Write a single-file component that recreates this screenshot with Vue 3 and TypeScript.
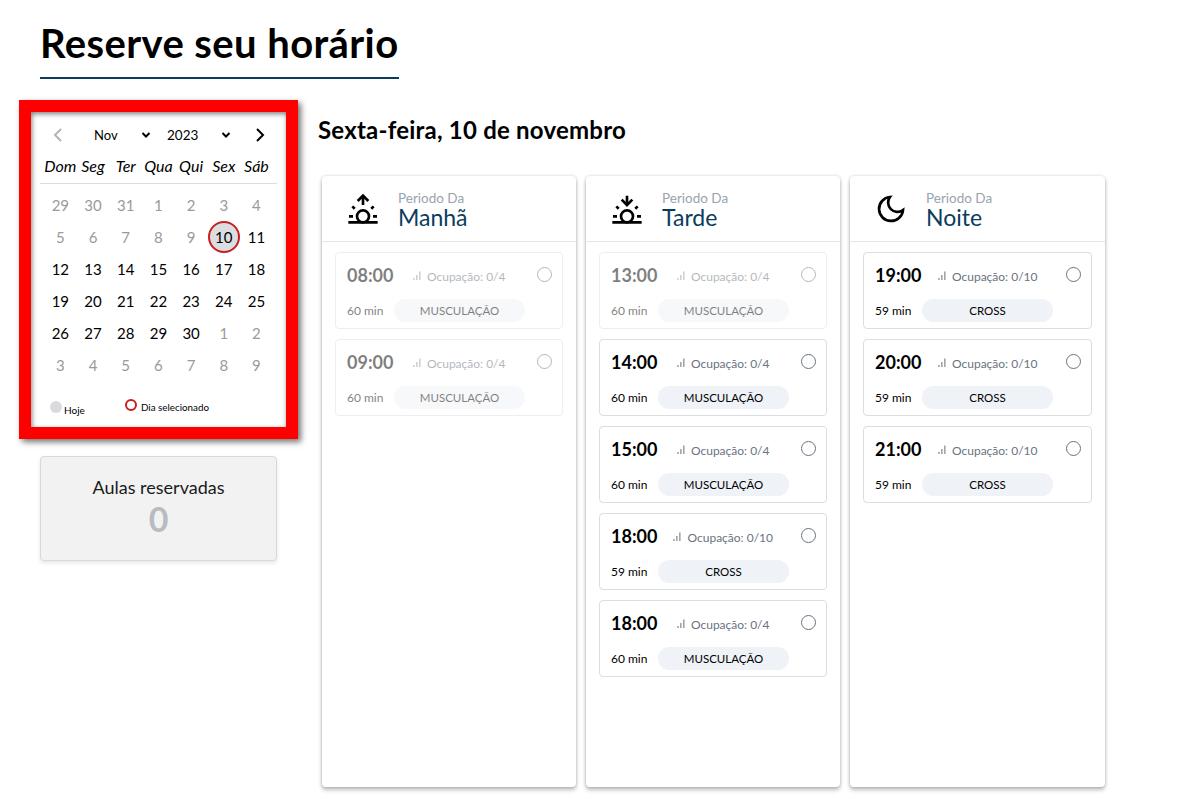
<template>
  <div class="page">
    <h1 class="title">Reserve seu horário</h1>
    <div class="content">
      <aside class="side">
        <div class="calendar">
          <div class="cal-nav">
            <svg class="chev off" viewBox="0 0 12 16"><path d="M9 2 3 8l6 6" /></svg>
            <span class="month">Nov</span>
            <svg class="caret" viewBox="0 0 10 8"><path d="M1.5 2 5 5.5 8.5 2" /></svg>
            <span class="year">2023</span>
            <svg class="caret" viewBox="0 0 10 8"><path d="M1.5 2 5 5.5 8.5 2" /></svg>
            <svg class="chev" viewBox="0 0 12 16"><path d="M3 2l6 6-6 6" /></svg>
          </div>
          <div class="weekdays">
            <span v-for="w in weekdays" :key="w">{{ w }}</span>
          </div>
          <div class="days">
            <span
              v-for="d in days"
              :key="d.key"
              class="day"
              :class="{ muted: d.muted, selected: d.selected }"
            >{{ d.n }}</span>
          </div>
          <div class="legend">
            <span class="leg-today"><i class="dot-today" />Hoje</span>
            <span class="leg-sel"><i class="dot-sel" />Dia selecionado</span>
          </div>
        </div>
        <div class="reserved">
          <div class="reserved-label">Aulas reservadas</div>
          <div class="reserved-count">0</div>
        </div>
      </aside>
      <main class="main">
        <h2 class="date">Sexta-feira, 10 de novembro</h2>
        <div class="columns">
          <section v-for="p in periods" :key="p.name" class="column">
            <header class="col-head">
              <svg class="period-icon" viewBox="0 0 24 24">
                <template v-if="p.icon === 'moon'">
                  <path d="M21 12.79A9 9 0 1 1 11.21 3 7 7 0 0 0 21 12.79z" />
                </template>
                <template v-else>
                  <circle cx="12" cy="17.5" r="4.5" />
                  <path d="M12 9V2M4 10l1.8 1.8M1.5 17.5H4.5M19.5 17.5h3M18.2 11.8L20 10M1 22h22" />
                  <path v-if="p.icon === 'up'" d="M8 6l4-4 4 4" />
                  <path v-else d="M8 5l4 4 4-4" />
                </template>
              </svg>
              <div class="period-text">
                <div class="period-of">Periodo Da</div>
                <div class="period-name">{{ p.name }}</div>
              </div>
            </header>
            <div class="slots">
              <div
                v-for="(s, i) in p.slots"
                :key="i"
                class="slot"
                :class="{ disabled: s.off }"
              >
                <div class="slot-top">
                  <span class="time">{{ s.time }}</span>
                  <span class="occ">
                    <svg class="bars" viewBox="0 0 8 9"><path d="M.3 9V7h1.3v2zM3.2 9V4h1.3v5zM6.2 9V.5h1.3V9z" /></svg>
                    Ocupação: {{ s.occ }}
                  </span>
                  <span class="radio" />
                </div>
                <div class="slot-bottom">
                  <span class="dur">{{ s.dur }} min</span>
                  <span class="pill">{{ s.kind }}</span>
                </div>
              </div>
            </div>
          </section>
        </div>
      </main>
    </div>
  </div>
</template>

<script setup lang="ts">
interface Slot {
  time: string
  occ: string
  dur: number
  kind: string
  off?: boolean
}

const weekdays = ['Dom', 'Seg', 'Ter', 'Qua', 'Qui', 'Sex', 'Sáb']

function buildDays() {
  const prev = [29, 30, 31]
  const out: { key: string; n: number; muted: boolean; selected: boolean }[] = []
  prev.forEach((n) => out.push({ key: 'p' + n, n, muted: true, selected: false }))
  for (let n = 1; n <= 30; n++) {
    // the first days up to the 9th are already past
    out.push({ key: 'c' + n, n, muted: n < 10, selected: n === 10 })
  }
  for (let n = 1; n <= 9; n++) out.push({ key: 'n' + n, n, muted: true, selected: false })
  return out
}
const days = buildDays()

const mus = (time: string, off = false): Slot => ({ time, occ: '0/4', dur: 60, kind: 'MUSCULAÇÃO', off })
const cross = (time: string): Slot => ({ time, occ: '0/10', dur: 59, kind: 'CROSS' })

const periods: { name: string; icon: string; slots: Slot[] }[] = [
  { name: 'Manhã', icon: 'up', slots: [mus('08:00', true), mus('09:00', true)] },
  {
    name: 'Tarde',
    icon: 'down',
    slots: [mus('13:00', true), mus('14:00'), mus('15:00'), cross('18:00'), mus('18:00')],
  },
  { name: 'Noite', icon: 'moon', slots: [cross('19:00'), cross('20:00'), cross('21:00')] },
]
</script>

<style>
html, body { background: #fff; }
</style>

<style scoped>
.page {
  font-family: Lato, "Noto Sans", sans-serif;
  color: #000;
  padding: 21px 0 0 40px;
  height: 795px;
  box-sizing: border-box;
  overflow: hidden;
}
.title {
  display: inline-block;
  margin: 0;
  font-size: 40px;
  line-height: 44px;
  font-weight: 700;
  letter-spacing: 0.4px;
  padding-bottom: 12px;
  border-bottom: 2px solid #0b3c5d;
}
.content {
  display: flex;
  margin-top: 21px;
}
.side {
  width: 237px;
  flex: none;
  margin-right: 41px;
}
.calendar {
  width: 279px;
  height: 339px;
  box-sizing: border-box;
  margin-left: -21px;
  border: 12px solid #f00;
  padding: 9px 9px 0;
  background: #fff;
  box-shadow: 3px 3px 6px rgba(0, 0, 0, 0.55), inset 1px 2px 5px rgba(0, 0, 0, 0.5);
}
.cal-nav {
  display: flex;
  align-items: center;
  height: 28px;
}
.cal-nav svg { fill: none; stroke: #000; stroke-width: 2; }
.chev { width: 12px; height: 16px; }
.chev.off { stroke: #b5b5b5; margin-left: 12px; }
.month { font-size: 13px; margin-left: 30px; width: 47px; }
.year { font-size: 13.5px; margin-left: 16px; width: 54px; }
.caret { width: 10px; height: 8px; }
.caret + .chev { margin-left: 23px; }
.weekdays {
  display: grid;
  grid-template-columns: repeat(7, 32.7px);
  margin: 0 0 0 4px;
  height: 34px;
  padding-bottom: 2px;
  box-sizing: border-box;
  align-items: center;
  font-size: 16px;
  font-weight: 400;
  font-style: italic;
  text-align: center;
  white-space: nowrap;
}
.days {
  display: grid;
  grid-template-columns: repeat(7, 32.7px);
  grid-auto-rows: 32px;
  padding: 5px 0 0 4px;
  border-top: 1px solid #dcdcdc;
  font-size: 15px;
  text-align: center;
}
.day {
  display: flex;
  align-items: center;
  justify-content: center;
}
.day.muted { color: #9a9a9a; }
.day.selected {
  width: 32px;
  height: 32px;
  justify-self: center;
  box-sizing: border-box;
  border: 2px solid #c81e1e;
  border-radius: 50%;
  background: #dcdde0;
}
.legend {
  display: flex;
  margin-top: 15px;
  padding-left: 10px;
  font-size: 10px;
  height: 20px;
}
.leg-today, .leg-sel { display: flex; align-items: flex-end; }
.leg-today { width: 75px; }
.leg-sel { align-items: center; height: 14px; margin-top: 4px; font-size: 9.8px; }
.dot-today {
  width: 12px;
  height: 12px;
  border-radius: 50%;
  background: #d9dade;
  margin: 0 2px 3px 0;
}
.dot-sel {
  width: 12px;
  height: 12px;
  box-sizing: border-box;
  border: 2px solid #c81e1e;
  border-radius: 50%;
  margin-right: 4px;
  margin-top: -4px;
}
.reserved {
  margin-top: 17px;
  height: 105px;
  box-sizing: border-box;
  background: #f2f2f2;
  border: 1px solid #d9d9d9;
  border-radius: 4px;
  box-shadow: 0 2px 4px rgba(0, 0, 0, 0.1);
  padding-top: 19px;
  text-align: center;
}
.reserved-label { font-size: 18px; line-height: 22px; color: #1a1a1a; }
.reserved-count {
  font-size: 34px;
  line-height: 40px;
  margin-top: 1px;
  font-weight: 700;
  color: #b8bcc2;
}
.main { flex: 1; min-width: 0; }
.date {
  margin: 14px 0 0;
  font-size: 24px;
  line-height: 32px;
  font-weight: 700;
  letter-spacing: 0.22px;
}
.columns {
  display: flex;
  gap: 10px;
  margin-top: 30px;
  padding-left: 4px;
}
.column {
  width: 254px;
  height: 611px;
  flex: none;
  box-sizing: border-box;
  background: #fff;
  border-radius: 4px;
  box-shadow: 0 3px 4px rgba(0, 0, 0, 0.25), 0 0 3px rgba(0, 0, 0, 0.18);
}
.column:last-child { width: 255px; }
.col-head {
  display: flex;
  align-items: center;
  height: 66px;
  box-sizing: border-box;
  padding-left: 25px;
  border-bottom: 1px solid #e6e6e6;
}
.period-icon {
  width: 32px;
  height: 32px;
  margin-right: 19px;
  fill: none;
  stroke: #000;
  stroke-width: 2;
}
.period-text { margin-top: 4px; }
.period-of { font-size: 13.5px; line-height: 13px; color: #9aa4ae; }
.period-name { font-size: 23px; line-height: 24px; color: #0b3c5d; }
.slots {
  display: flex;
  flex-direction: column;
  gap: 10px;
  padding: 10px 13px;
}
.slot {
  height: 77px;
  box-sizing: border-box;
  border: 1px solid #dcdde0;
  border-radius: 4px;
  padding: 0 10px 0 11px;
}
.slot.disabled { border-color: #eeeeef; }
.slot.disabled > * { opacity: 0.5; }
.slot-top {
  display: flex;
  align-items: center;
  justify-content: space-between;
  height: 44px;
}
.time { font-size: 18px; font-weight: 700; }
.occ {
  font-size: 12px;
  color: #6b7280;
  padding-right: 12px;
  padding-top: 2px;
  display: flex;
  align-items: center;
  white-space: pre;
}
.bars { width: 8px; height: 9px; fill: #8a8f98; margin-right: 3px; margin-top: -2px; }
.radio {
  width: 15px;
  height: 15px;
  box-sizing: border-box;
  border: 1.5px solid #6b7280;
  border-radius: 50%;
  margin-top: -2px;
}
.slot-bottom {
  display: flex;
  align-items: center;
  height: 23px;
  margin-top: 2px;
}
.dur { font-size: 12px; width: 47px; flex: none; }
.pill {
  width: 131px;
  height: 23px;
  line-height: 23px;
  text-align: center;
  background: #eff2f7;
  border-radius: 12px;
  font-size: 11.5px;
}
</style>
